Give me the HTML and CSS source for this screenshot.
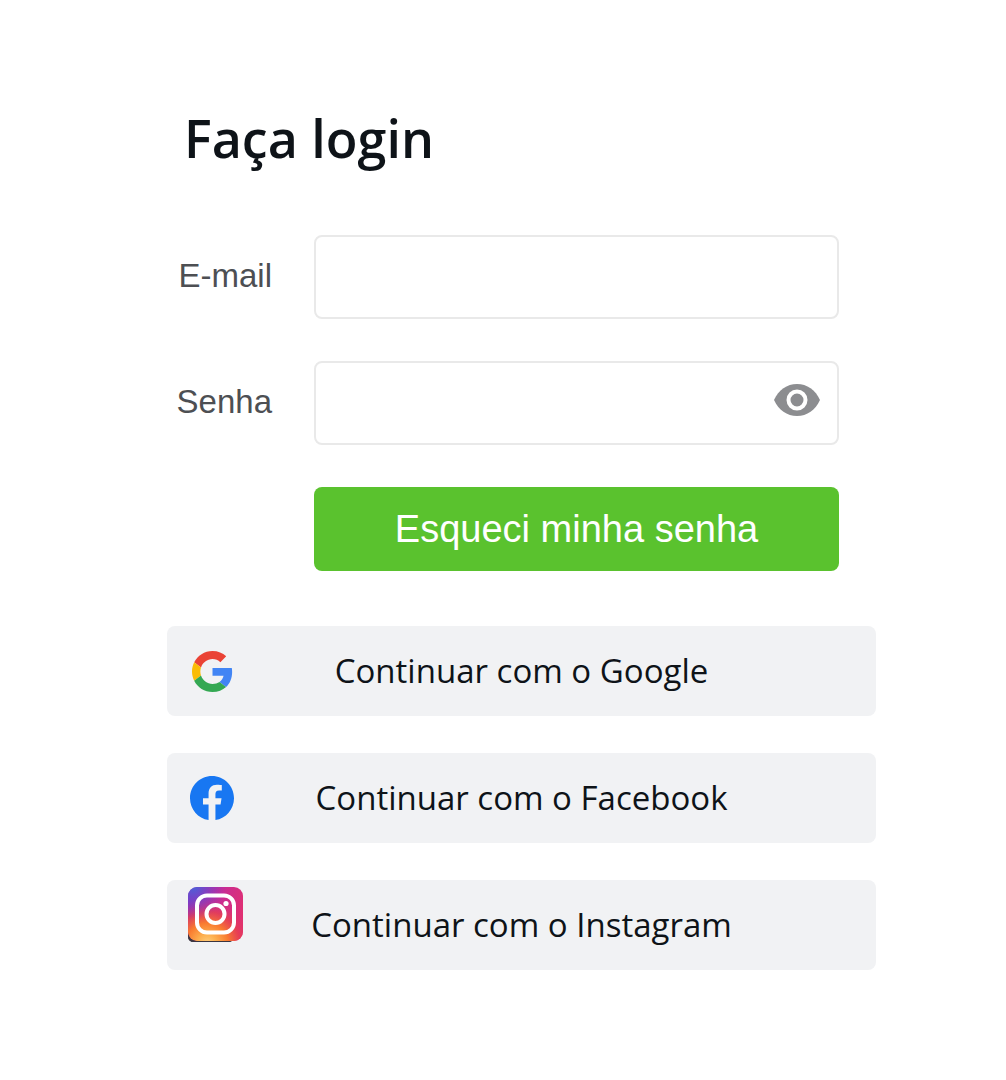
FILE: index.html
```html
<!DOCTYPE html>
<html lang="pt-BR">
<head>
<meta charset="utf-8">
<meta name="viewport" content="width=device-width, initial-scale=1">
<title>Faça login</title>
<link rel="stylesheet" href="styles.css">
</head>
<body>
<main class="login">
  <h1 class="login-title">Faça login</h1>
  <form class="login-form">
    <label class="field-label" for="email">E-mail</label>
    <input class="field-input" id="email" name="email" type="email" autocomplete="email">
    <label class="field-label" for="password">Senha</label>
    <div class="password-field">
      <input class="field-input password-input" id="password" name="password" type="password" autocomplete="current-password">
      <button class="password-toggle" type="button" aria-label="Mostrar senha">
        <svg class="eye-icon" viewBox="0 0 46 32" aria-hidden="true">
          <path fill="#8c8d90" d="M0 16C4.500 6 13 0 23 0s18.500 6 23 16c-4.500 10-13 16-23 16S4.500 26 0 16z"/>
          <circle cx="23" cy="16" r="8.500" fill="#8c8d90" stroke="#fff" stroke-width="4"/>
        </svg>
      </button>
    </div>
    <button class="forgot-button" type="button">Esqueci minha senha</button>
  </form>
  <div class="social-list">
    <button class="social-button" type="button">
      <svg class="social-icon google-icon" viewBox="0 0 48 48" aria-hidden="true">
        <path fill="#ea4335" d="M24 9.500c3.540 0 6.710 1.220 9.210 3.600l6.850-6.850C35.900 2.380 30.470 0 24 0 14.620 0 6.510 5.380 2.560 13.220l7.980 6.190C12.430 13.720 17.740 9.500 24 9.500z"/>
        <path fill="#4285f4" d="M46.980 24.550c0-1.570-.15-3.090-.38-4.550H24v9.020h12.940c-.58 2.960-2.260 5.480-4.780 7.180l7.730 6c4.510-4.180 7.090-10.360 7.090-17.650z"/>
        <path fill="#fbbc05" d="M10.530 28.590c-.48-1.450-.76-2.990-.76-4.590s.27-3.140.76-4.590l-7.980-6.190C.92 16.460 0 20.120 0 24c0 3.880.92 7.540 2.560 10.780l7.970-6.190z"/>
        <path fill="#34a853" d="M24 48c6.480 0 11.930-2.130 15.890-5.810l-7.730-6c-2.150 1.450-4.920 2.300-8.160 2.300-6.260 0-11.570-4.220-13.470-9.910l-7.980 6.190C6.510 42.620 14.620 48 24 48z"/>
      </svg>
      <span class="social-text">Continuar com o Google</span>
    </button>
    <button class="social-button" type="button">
      <svg class="social-icon facebook-icon" viewBox="0 0 24 24" aria-hidden="true">
        <path fill="#1877f2" d="M24 12.073C24 5.405 18.627 0 12 0S0 5.405 0 12.073c0 6.026 4.388 11.021 10.125 11.927v-8.437H7.078v-3.490h3.047v-2.660c0-3.026 1.792-4.697 4.533-4.697 1.312 0 2.686.236 2.686.236v2.971h-1.513c-1.491 0-1.956.93-1.956 1.886v2.264h3.328l-.532 3.490h-2.796V24C19.612 23.094 24 18.099 24 12.073z"/>
      </svg>
      <span class="social-text">Continuar com o Facebook</span>
    </button>
    <button class="social-button" type="button">
      <svg class="social-icon instagram-icon" viewBox="0 0 55 55" aria-hidden="true">
        <defs>
          <linearGradient id="ig-base" x1="0" y1="0.300" x2="1" y2="0.600">
            <stop offset="0" stop-color="#8d2bbd"/>
            <stop offset="0.500" stop-color="#c82c94"/>
            <stop offset="1" stop-color="#e2306f"/>
          </linearGradient>
          <radialGradient id="ig-warm" cx="0.350" cy="1.050" r="0.850">
            <stop offset="0" stop-color="#ffd080"/>
            <stop offset="0.200" stop-color="#fdb04f"/>
            <stop offset="0.450" stop-color="#f97b30"/>
            <stop offset="0.700" stop-color="#e8404f" stop-opacity="0.800"/>
            <stop offset="1" stop-color="#d62e80" stop-opacity="0"/>
          </radialGradient>
          <radialGradient id="ig-cool" cx="0.100" cy="0" r="0.600">
            <stop offset="0" stop-color="#4b62d8"/>
            <stop offset="1" stop-color="#8b35c4" stop-opacity="0"/>
          </radialGradient>
        </defs>
        <path fill="#3b3540" d="M0 42v7q0 6 6 6h38L20 40z"/>
        <rect width="55" height="54" rx="9" fill="url(#ig-base)"/>
        <rect width="55" height="54" rx="9" fill="url(#ig-warm)"/>
        <rect width="55" height="54" rx="9" fill="url(#ig-cool)"/>
        <path fill="#3b3540" d="M0 47q1 6 8 7l-2 1q-6 0-6-6z"/>
        <rect x="9" y="8.500" width="37" height="37" rx="10" fill="none" stroke="#fff" stroke-width="4"/>
        <circle cx="27.500" cy="27" r="9" fill="none" stroke="#fff" stroke-width="4"/>
        <circle cx="38" cy="16.500" r="2.600" fill="#fff"/>
      </svg>
      <span class="social-text">Continuar com o Instagram</span>
    </button>
  </div>
</main>
</body>
</html>
```

FILE: styles.css
```css
*,
*::before,
*::after {
  box-sizing: border-box;
}

body {
  margin: 0;
  background: #fff;
  color: #0e1318;
  font-family: "Liberation Sans", Arial, sans-serif;
}

button,
input {
  margin: 0;
  border: 0;
  font: inherit;
  color: inherit;
}

button {
  cursor: pointer;
}

.login {
  padding: 102px 130px 104px 167px;
}

.login-title {
  margin: 0 0 62px;
  padding-left: 17px;
  font-family: "Open Sans", sans-serif;
  font-size: 52px;
  font-weight: 600;
  line-height: 71px;
}

.login-form {
  display: grid;
  grid-template-columns: 105px 1fr;
  gap: 42px;
  align-items: center;
  padding-right: 37px;
}

.field-label {
  padding-bottom: 2px;
  color: #4d4f53;
  font-size: 33px;
  line-height: 40px;
  text-align: right;
}

.field-input {
  width: 100%;
  height: 84px;
  padding: 0 24px;
  border: 2px solid #e9e9e9;
  border-radius: 8px;
  background: #fff;
  font-size: 33px;
}

.password-field {
  display: grid;
  align-items: center;
}

.password-field > * {
  grid-area: 1 / 1;
}

.password-input {
  padding-right: 80px;
}

.password-toggle {
  justify-self: end;
  margin: 0 19px 7px 0;
  padding: 0;
  background: none;
}

.eye-icon {
  display: block;
  width: 46px;
  height: 32px;
}

.forgot-button {
  grid-column: 2;
  height: 84px;
  border-radius: 8px;
  background: #5ac22e;
  color: #fff;
  font-size: 38px;
}

.social-list {
  display: grid;
  gap: 37px;
  margin-top: 55px;
}

.social-button {
  display: grid;
  grid-template-columns: 90px 1fr 90px;
  align-items: center;
  height: 90px;
  padding: 0;
  border-radius: 8px;
  background: #f1f2f4;
  font-family: "Open Sans", sans-serif;
  font-size: 33px;
  font-weight: 500;
}

.social-text {
  padding-bottom: 2px;
}

.social-icon {
  display: block;
  justify-self: center;
}

.google-icon {
  width: 41px;
  height: 41px;
}

.facebook-icon {
  width: 44px;
  height: 44px;
}

.instagram-icon {
  align-self: start;
  justify-self: end;
  width: 55px;
  height: 55px;
  margin: 7px 14px 0 0;
}
```
